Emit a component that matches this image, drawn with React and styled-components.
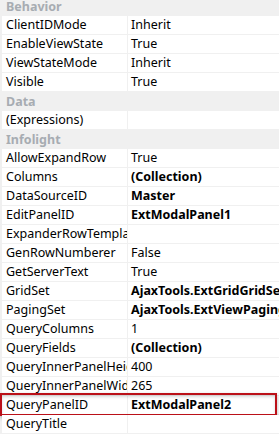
import React from "react";
import styled, { createGlobalStyle } from "styled-components";

const GlobalStyle = createGlobalStyle`
  html, body {
    margin: 0;
    padding: 0;
    background: #f0f0f0;
    overflow: hidden;
  }
  body {
    font-family: "Noto Sans", "Open Sans", sans-serif;
    font-size: 12.5px;
    color: #000;
  }
`;

const Grid = styled.div`
  width: 279px;
  height: 434px;
  overflow: hidden;
  display: flex;
  flex-direction: column;
`;

const List = styled.div`
  display: flex;
  flex-direction: column;
  margin-top: -3px;
`;

const CategoryRow = styled.div`
  height: 19px;
  display: flex;
  align-items: center;
  padding-left: 6px;
  font-weight: 700;
  color: #a7acb2;
  background: #f0f0f0;
`;

const PropRow = styled.div`
  position: relative;
  height: 18px;
  display: flex;
  padding-left: 2px;
  border-bottom: 1px solid #f0f0f0;
`;

const NameCell = styled.div`
  width: 121px;
  flex: none;
  background: #fff;
  padding-left: 4px;
  line-height: 18px;
  white-space: nowrap;
  overflow: hidden;
  border-right: 1px solid #f0f0f0;
`;

const ValueCell = styled.div`
  flex: 1;
  background: #fff;
  padding-left: 3px;
  line-height: 18px;
  white-space: nowrap;
  overflow: hidden;
  font-weight: ${(props) => (props.bold ? 700 : 400)};
`;

const Highlight = styled.div`
  position: absolute;
  top: -3px;
  bottom: -2px;
  left: 0;
  right: 2px;
  border: 2px solid #bb1018;
  box-shadow: 0 2px 4px rgba(0, 0, 0, 0.3), inset 0 2px 3px rgba(0, 0, 0, 0.15);
  pointer-events: none;
`;

const rows = [
  { category: "Behavior" },
  { name: "ClientIDMode", value: "Inherit" },
  { name: "EnableViewState", value: "True" },
  { name: "ViewStateMode", value: "Inherit" },
  { name: "Visible", value: "True" },
  { category: "Data" },
  { name: "(Expressions)", value: "" },
  { category: "Infolight" },
  { name: "AllowExpandRow", value: "True" },
  { name: "Columns", value: "(Collection)", bold: true },
  { name: "DataSourceID", value: "Master", bold: true },
  { name: "EditPanelID", value: "ExtModalPanel1", bold: true },
  { name: "ExpanderRowTemplate", value: "" },
  { name: "GenRowNumberer", value: "False" },
  { name: "GetServerText", value: "True" },
  { name: "GridSet", value: "AjaxTools.ExtGridGridSet", bold: true },
  { name: "PagingSet", value: "AjaxTools.ExtViewPagingSet", bold: true },
  { name: "QueryColumns", value: "1" },
  { name: "QueryFields", value: "(Collection)", bold: true },
  { name: "QueryInnerPanelHeight", value: "400" },
  { name: "QueryInnerPanelWidth", value: "265" },
  { name: "QueryPanelID", value: "ExtModalPanel2", bold: true, selected: true },
  { name: "QueryTitle", value: "" },
];

function App() {
  return (
    <Grid>
      <GlobalStyle />
      <List>
        {rows.map((row, i) =>
          row.category ? (
            <CategoryRow key={i}>{row.category}</CategoryRow>
          ) : (
            <PropRow key={i}>
              <NameCell>{row.name}</NameCell>
              <ValueCell bold={row.bold}>{row.value}</ValueCell>
              {row.selected && <Highlight />}
            </PropRow>
          )
        )}
      </List>
    </Grid>
  );
}

export default App;
